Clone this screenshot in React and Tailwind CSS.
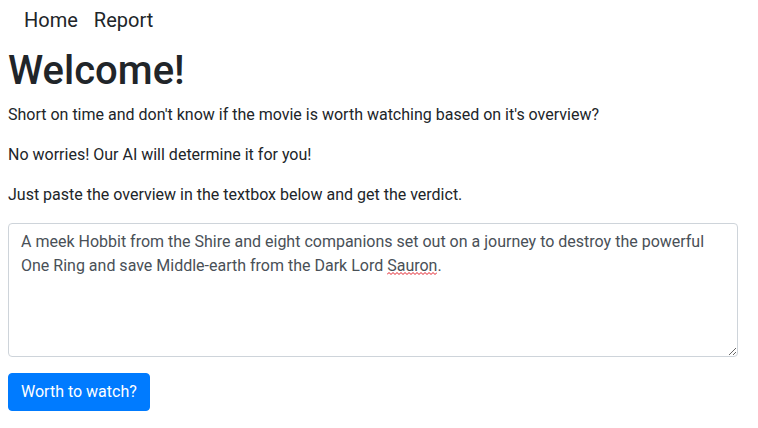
import React from "react";

const overview =
  "A meek Hobbit from the Shire and eight companions set out on a journey to destroy the powerful One Ring and save Middle-earth from the Dark Lord Sauron.";

function Navbar() {
  return (
    <nav className="flex px-4 pt-[5px] pb-[12px] text-[20px] leading-[30px]">
      <a href="#" className="px-2 text-[#212529]">
        Home
      </a>
      <a href="#" className="px-2 text-[#212529]">
        Report
      </a>
    </nav>
  );
}

// red spellcheck squiggle under "Sauron"
function Squiggle({ width }) {
  let pts = [];
  for (let x = 0; x <= width; x += 2) pts.push(`${x},${(x / 2) % 2 === 0 ? 2.5 : 0.5}`);
  return (
    <svg width={width} height="3" className="absolute left-[379px] top-[49px] pointer-events-none">
      <polyline points={pts.join(" ")} fill="none" stroke="#e01b24" strokeWidth="1" />
    </svg>
  );
}

export default function App() {
  return (
    <div className="bg-white text-[#212529] font-['Roboto',sans-serif] text-base leading-6">
      <Navbar />
      <div className="px-2">
        <h1 className="text-[40px] leading-[48px] font-medium mb-2">Welcome!</h1>
        <p className="mb-4">
          Short on time and don't know if the movie is worth watching based on it's overview?
        </p>
        <p className="mb-4">No worries! Our AI will determine it for you!</p>
        <p className="mb-4">Just paste the overview in the textbox below and get the verdict.</p>
        <div className="relative w-[730px] mt-[1px]">
          <textarea
            rows={5}
            defaultValue={overview}
            spellCheck={false}
            className="block w-full border border-[#ced4da] rounded px-3 py-1.5 text-[#495057] leading-6 outline-none"
          />
          <Squiggle width={50} />
        </div>
        <button className="mt-4 bg-[#007bff] text-white rounded px-3 py-1.5 leading-6 border border-[#007bff]">
          Worth to watch?
        </button>
      </div>
    </div>
  );
}
